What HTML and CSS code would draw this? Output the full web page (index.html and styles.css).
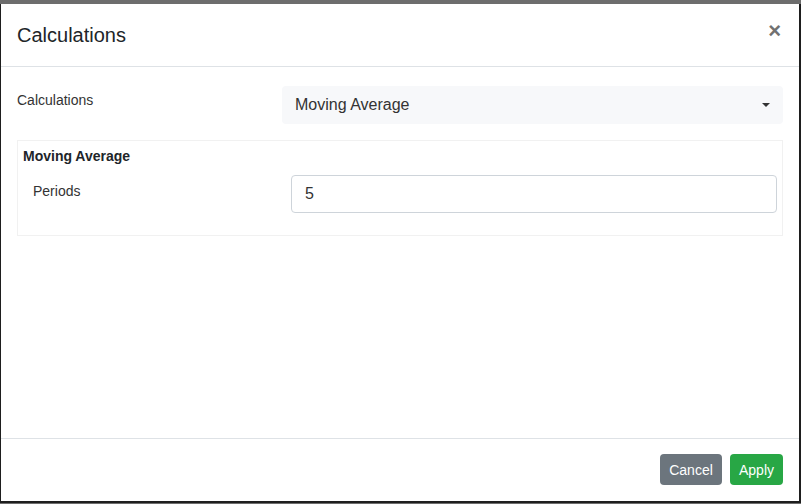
FILE: index.html
```html
<!DOCTYPE html>
<html>
<head>
<meta charset="utf-8">
<link rel="stylesheet" href="styles.css">
</head>
<body>
<div class="modal">
  <div class="modal-header">
    <h5 class="modal-title">Calculations</h5>
    <span class="close">&times;</span>
  </div>
  <div class="modal-body">
    <div class="form-row">
      <label class="row-label">Calculations</label>
      <div class="select">
        <span>Moving Average</span>
        <span class="caret"></span>
      </div>
    </div>
    <div class="panel">
      <div class="panel-title">Moving Average</div>
      <div class="panel-row">
        <label class="panel-label">Periods</label>
        <div class="input">5</div>
      </div>
    </div>
  </div>
  <div class="modal-footer">
    <button class="btn btn-secondary">Cancel</button>
    <button class="btn btn-success">Apply</button>
  </div>
</div>
</body>
</html>
```
FILE: styles.css
```css
html, body {
  margin: 0;
  padding: 0;
}
body {
  background: #6d6d6d;
  font-family: "Liberation Sans", Arial, sans-serif;
  color: #212529;
  width: 801px;
  height: 504px;
  overflow: hidden;
  padding-top: 4px;
  box-sizing: border-box;
}
.modal {
  background: #fff;
  height: 499px;
  border-left: 1px solid #1e1e1e;
  border-right: 2px solid #1e1e1e;
  border-bottom: 2px solid #1e1e1e;
  display: flex;
  flex-direction: column;
  box-sizing: border-box;
}
.modal-header {
  display: flex;
  justify-content: space-between;
  align-items: flex-start;
  padding: 16px;
  border-bottom: 1px solid #dee2e6;
}
.modal-title {
  margin: 0;
  font-size: 20px;
  font-weight: 400;
  line-height: 30px;
  color: #212529;
}
.close {
  font-size: 22px;
  font-weight: 700;
  line-height: 22px;
  color: #717171;
  margin-top: 0px;
  margin-right: 2px;
}
.modal-body {
  flex: 1;
  padding: 19px 16px 16px 16px;
}
.form-row {
  display: grid;
  grid-template-columns: 265px 1fr;
  margin-bottom: 16px;
}
.row-label {
  font-size: 14px;
  line-height: 21px;
  padding-top: 4px;
  color: #333;
}
.select {
  height: 38px;
  background: #f7f8fa;
  border-radius: 4px;
  display: flex;
  align-items: center;
  justify-content: space-between;
  padding: 0 13px;
  font-size: 16px;
  color: #333;
  box-sizing: border-box;
}
.caret {
  width: 0;
  height: 0;
  border-left: 4px solid transparent;
  border-right: 4px solid transparent;
  border-top: 4px solid #333;
  margin-right: 0px;
}
.panel {
  border: 1px solid #f1f1f1;
  padding: 5px 5px 22px 5px;
}
.panel-title {
  font-size: 14px;
  font-weight: 700;
  line-height: 21px;
  color: #212529;
  margin-bottom: 8px;
}
.panel-row {
  display: grid;
  grid-template-columns: 268px 1fr;
}
.panel-label {
  font-size: 14px;
  line-height: 21px;
  padding-top: 6px;
  padding-left: 10px;
  color: #333;
}
.input {
  height: 38px;
  border: 1px solid #ced4da;
  border-radius: 4px;
  box-sizing: border-box;
  padding: 0 13px;
  display: flex;
  align-items: center;
  font-size: 16px;
  color: #333;
}
.modal-footer {
  display: flex;
  justify-content: flex-end;
  gap: 8px;
  padding: 15px 16px 16px 16px;
  border-top: 1px solid #dee2e6;
}
.btn {
  border: none;
  border-radius: 4px;
  font-family: "Liberation Sans", Arial, sans-serif;
  font-size: 14px;
  height: 31px;
  padding: 0 9px;
  color: #fff;
}
.btn-secondary {
  background: #6c757d;
  width: 62px;
}
.btn-success {
  background: #28a745;
  width: 53px;
}
```
